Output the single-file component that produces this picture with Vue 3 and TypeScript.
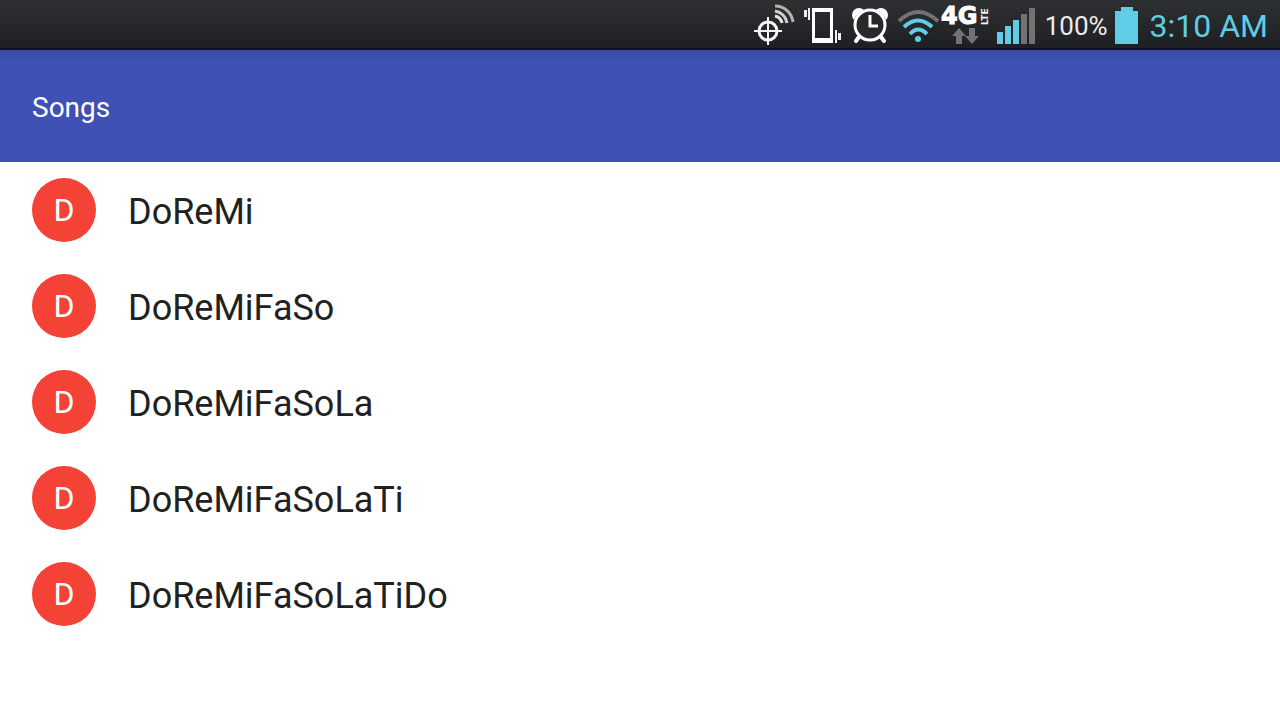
<script setup lang="ts">
interface Song {
  id: number
  title: string
}

const songs: Song[] = [
  { id: 1, title: 'DoReMi' },
  { id: 2, title: 'DoReMiFaSo' },
  { id: 3, title: 'DoReMiFaSoLa' },
  { id: 4, title: 'DoReMiFaSoLaTi' },
  { id: 5, title: 'DoReMiFaSoLaTiDo' },
]
</script>

<template>
  <div class="screen">
    <div class="status-bar">
      <div class="icons">
        <!-- GPS -->
        <svg width="48" height="48" viewBox="0 0 48 48" aria-hidden="true">
          <g fill="none" stroke="#f4f4f4">
            <circle cx="18" cy="31" r="9" stroke-width="3" />
            <path d="M18 17v28M4 31h28" stroke-width="2" />
            <path d="M25 16a9 9 0 0 1 7 7" stroke="#e4e4e4" stroke-width="3" />
            <path d="M25 11a14 14 0 0 1 12 12" stroke="#cfcfcf" stroke-width="3" />
            <path d="M25 6a18 18 0 0 1 18 16" stroke="#b4b4b4" stroke-width="3" />
          </g>
        </svg>
        <!-- Vibrate -->
        <svg width="48" height="48" viewBox="0 0 48 48" aria-hidden="true">
          <path fill="#fff" fill-rule="evenodd" d="M14 8h21v35H14zM17 12v26h15V12z" />
          <path fill="#f0f0f0" d="M6 10h3v7H6zM10 8h2v12h-2zM37 30h2v13h-2zM40 33h3v7h-3z" />
        </svg>
        <!-- Alarm -->
        <svg width="48" height="48" viewBox="0 0 48 48" aria-hidden="true">
          <g fill="#fff">
            <circle cx="13" cy="15" r="7" />
            <circle cx="35" cy="15" r="7" />
          </g>
          <circle cx="24" cy="26" r="17" fill="#27292b" />
          <g fill="none" stroke="#fff">
            <path d="M13 37l-3 4M35 37l3 4" stroke-width="4" stroke-linecap="round" />
            <circle cx="24" cy="25" r="15" stroke-width="3" />
            <path d="M24 15v11h8" stroke-width="3" />
          </g>
        </svg>
        <!-- Wi-Fi -->
        <svg width="48" height="48" viewBox="0 0 48 48" aria-hidden="true">
          <g fill="none" stroke="#5fcde6" stroke-width="4">
            <path d="M5 21Q24 3 44 21" stroke="#737373" />
            <path d="M10 27Q24 14 38 27" />
            <path d="M16 34Q24 25 33 34" />
          </g>
          <circle cx="24" cy="39" r="3" fill="#5fcde6" />
        </svg>
        <!-- Mobile data -->
        <svg class="network" width="50" height="48" viewBox="0 0 50 48">
          <text class="generation" x="-1" y="24">4G</text>
          <text class="lte" transform="translate(46 25) rotate(-90)">LTE</text>
          <path fill="#737373" d="M17 28l7 8h-4v8h-6v-8h-4zM30 44l-7-8h4v-8h6v8h4z" />
        </svg>
        <!-- Signal strength -->
        <svg width="48" height="48" viewBox="0 0 48 48" aria-hidden="true">
          <path fill="#5fcde6" d="M5 32h6v12H5zM13 26h6v18h-6zM21 20h6v24h-6z" />
          <path fill="#737373" d="M29 14h6v30h-6zM37 8h6v36h-6z" />
        </svg>
      </div>
      <span class="percent">100%</span>
      <svg class="battery" width="24" height="48" viewBox="0 0 24 48" aria-hidden="true">
        <path fill="#5fcde6" d="M6 7h12v4h5v33H0V11h6z" />
      </svg>
      <time class="clock">3:10 AM</time>
    </div>

    <header class="app-bar">
      <h1>Songs</h1>
    </header>

    <main>
      <ul class="songs">
        <li v-for="song in songs" :key="song.id" class="song">
          <span class="avatar" aria-hidden="true">{{ song.title.charAt(0) }}</span>
          <span class="title">{{ song.title }}</span>
        </li>
      </ul>
    </main>
  </div>
</template>

<style>
body {
  margin: 0;
  background: #fff;
}
</style>

<style scoped>
.screen {
  min-height: 100vh;
  background: #fff;
  font-family: Roboto, "Liberation Sans", sans-serif;
}

.status-bar {
  display: flex;
  align-items: center;
  justify-content: flex-end;
  box-sizing: border-box;
  height: 50px;
  padding-right: 12px;
  border-bottom: 2px solid #101114;
  background: linear-gradient(#2e3032, #1d1f22);
  white-space: nowrap;
}

.icons {
  display: flex;
}

.icons svg,
.battery {
  display: block;
  flex: none;
}

.network {
  overflow: visible;
}

.generation {
  fill: #fff;
  stroke: #fff;
  stroke-width: 1px;
  font: bold 24px "DejaVu Sans", sans-serif;
}

.lte {
  fill: #f0f0f0;
  font: bold 9px "DejaVu Sans", sans-serif;
}

.percent {
  margin-left: 5px;
  padding-top: 4px;
  color: #ececec;
  font-size: 26px;
  line-height: 32px;
}

.battery {
  margin: 0 11px 0 7px;
}

.clock {
  padding-top: 4px;
  color: #5fcde6;
  font-size: 32px;
  line-height: 40px;
}

.app-bar {
  display: flex;
  align-items: center;
  height: 112px;
  padding: 0 32px;
  background: linear-gradient(#3a4ba4, #3f51b5 12px);
}

.app-bar h1 {
  margin: 0;
  padding-top: 4px;
  color: #fff;
  font-size: 28px;
  font-weight: 400;
  line-height: 32px;
}

.songs {
  margin: 0;
  padding: 0;
  list-style: none;
}

.song {
  display: flex;
  align-items: center;
  gap: 32px;
  padding: 16px 32px;
}

.avatar {
  display: flex;
  flex: none;
  align-items: center;
  justify-content: center;
  width: 64px;
  height: 64px;
  border-radius: 50%;
  background: #f44336;
  color: #fff;
  font-size: 32px;
  line-height: 40px;
}

.title {
  padding-top: 4px;
  color: #212121;
  font-size: 36px;
  line-height: 48px;
}
</style>
